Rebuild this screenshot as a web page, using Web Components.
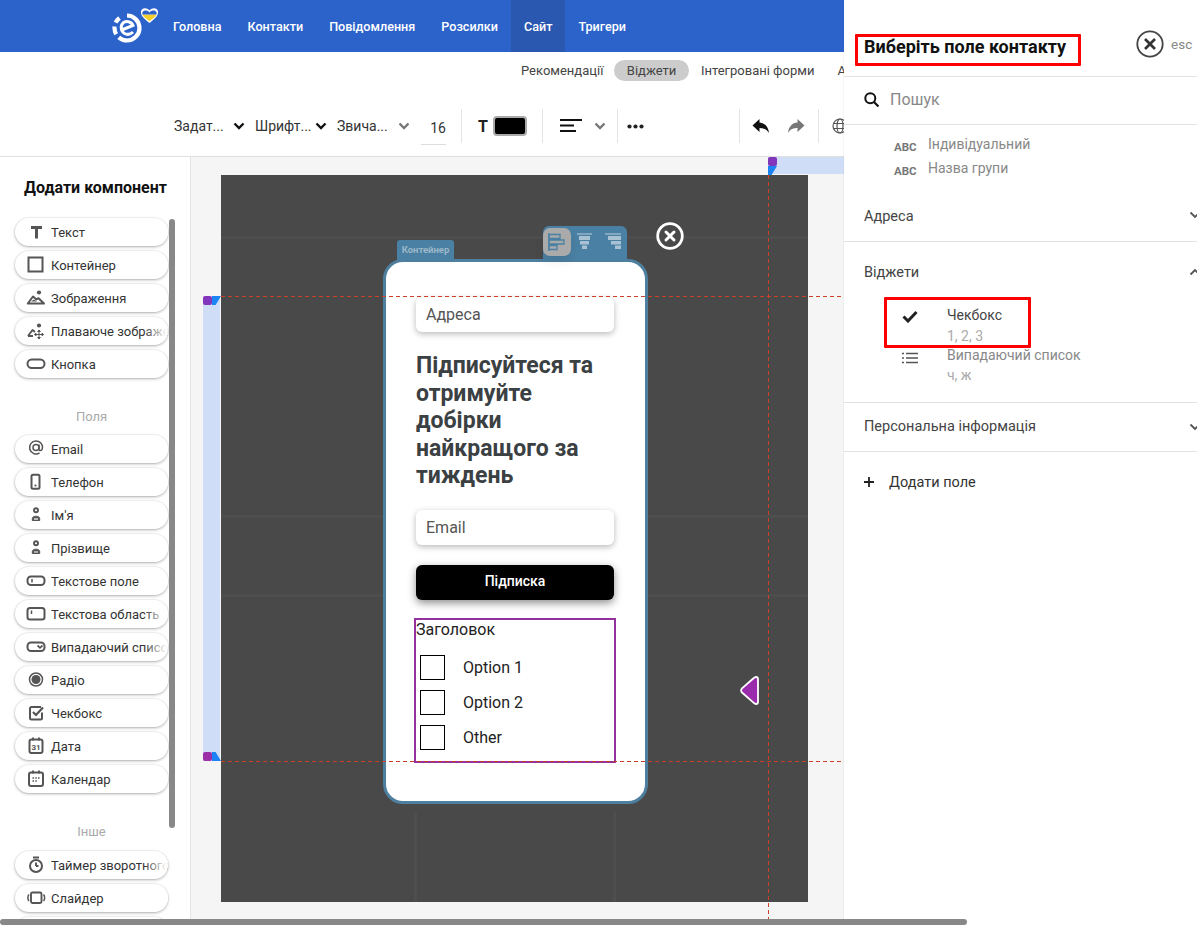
<!DOCTYPE html>
<html><head><meta charset="utf-8">
<style>
html,body{margin:0;padding:0;height:925px;width:1197px;overflow:hidden;background:#fff;font-family:Roboto,"Liberation Sans",sans-serif;}
</style></head><body>
<app-shell></app-shell>
<script>
const I={
 none:'',
 text:'<path d="M5 4h11v3h-4v9.500H9V7H5z" fill="#555"/>',
 box:'<rect x="2.500" y="2.500" width="14" height="14" fill="none" stroke="#555" stroke-width="2"/>',
 image:'<path d="M1.800 15.500L7 8.500l3.500 3 2-1.300 5.500 5.300z" fill="none" stroke="#555" stroke-width="2" stroke-linejoin="round"/><path d="M5 13.500l3-2 3 2z" fill="#555"/><circle cx="13" cy="4.500" r="2.100" fill="#555"/>',
 floatimg:'<path d="M2 15l4.500-6 2.500 2M2 15h5" fill="none" stroke="#555" stroke-width="1.900" stroke-linejoin="round"/><circle cx="13" cy="4.500" r="2.100" fill="#555"/><path d="M13 9v9M8.500 13.500h9M13 9l-1.300 1.500h2.600zM13 18l-1.300-1.500h2.600zM8.500 13.500l1.500-1.300v2.600zM17.500 13.500l-1.500-1.300v2.600z" fill="#555" stroke="#555" stroke-width="1"/>',
 button:'<rect x="1.500" y="5.500" width="17" height="8.500" rx="4.200" fill="none" stroke="#555" stroke-width="2"/>',
 at:'<circle cx="10" cy="8.500" r="3" fill="none" stroke="#555" stroke-width="1.500"/><path d="M13 5.500V10c0 2.500 3.500 2 3.500-1.500 0-4-3-6.500-6.500-6.500a6.500 6.500 0 1 0 3.500 12" fill="none" stroke="#555" stroke-width="1.500"/>',
 phone:'<rect x="5.500" y="2.800" width="8" height="14" rx="1.500" fill="none" stroke="#555" stroke-width="2"/><circle cx="9.500" cy="13.500" r="1.100" fill="#555"/>',
 person:'<circle cx="10" cy="5.300" r="2" fill="none" stroke="#555" stroke-width="1.900"/><path d="M6.300 15.500v-2c0-1.500 1.800-2.300 3.700-2.300s3.700.8 3.700 2.300v2z" fill="#555" stroke="#555" stroke-width="1"/><path d="M8 14h4" stroke="#fff" stroke-width="1.200"/>',
 input:'<rect x="1.500" y="5.500" width="17" height="8.500" rx="3.500" fill="none" stroke="#555" stroke-width="2"/><path d="M6 8v3.500" stroke="#555" stroke-width="1.500"/>',
 area:'<rect x="1.500" y="4" width="17" height="11.500" rx="2.500" fill="none" stroke="#555" stroke-width="2"/><path d="M5.500 6.500v3.500" stroke="#555" stroke-width="1.500"/>',
 select:'<rect x="1.500" y="5.500" width="17" height="8.500" rx="3.500" fill="none" stroke="#555" stroke-width="2"/><path d="M11.500 8.500l2.500 2.300 2.500-2.300" fill="none" stroke="#555" stroke-width="1.700"/>',
 radio:'<circle cx="10" cy="9.500" r="6.500" fill="none" stroke="#555" stroke-width="1.500"/><circle cx="10" cy="9.500" r="4.500" fill="#555"/>',
 check:'<path d="M16 9.500V15a1.500 1.500 0 0 1-1.500 1.500h-9A1.500 1.500 0 0 1 4 15V5.500A1.500 1.500 0 0 1 5.500 4H15" fill="none" stroke="#555" stroke-width="2"/><path d="M7 9l3 3 7-7.500" fill="none" stroke="#555" stroke-width="2.200"/>',
 date:'<rect x="3.500" y="3.500" width="13" height="13.500" rx="2" fill="none" stroke="#555" stroke-width="2"/><path d="M7 1.500v3M13 1.500v3" stroke="#555" stroke-width="1.900"/><text x="10" y="14" font-size="8" font-weight="700" text-anchor="middle" fill="#555" font-family="Roboto">31</text>',
 cal:'<rect x="3" y="3.500" width="14" height="13.500" rx="2" fill="none" stroke="#555" stroke-width="2"/><path d="M7 1.500v3M13 1.500v3" stroke="#555" stroke-width="1.900"/><path d="M6.500 9h1.500M9.300 9h1.500M12 9h1.500M6.500 12h1.500M9.300 12h1.500" stroke="#555" stroke-width="1.700"/>',
 timer:'<circle cx="10" cy="11" r="6" fill="none" stroke="#555" stroke-width="2"/><path d="M7 2.500h6M10 11V7.500M10 11h2.500" stroke="#555" stroke-width="1.900"/>',
 slider:'<rect x="5" y="4.500" width="10.500" height="10.500" rx="1.500" fill="none" stroke="#555" stroke-width="1.900"/><path d="M3 6.500C1.500 8 1.500 11.500 3 13M17.500 6.500c1.500 1.500 1.500 5 0 6.500" fill="none" stroke="#555" stroke-width="1.500"/>'
};
function def(name,css,html){
 customElements.define(name,class extends HTMLElement{
  connectedCallback(){
   if(this.shadowRoot)return;
   const s=this.attachShadow({mode:'open'});
   s.innerHTML='<style>'+css+'</style>'+(typeof html==='function'?html(this):html);
  }
 });
}
def('ui-pill',`:host{display:flex;align-items:center;box-sizing:border-box;width:153px;height:28px;flex:none;background:#fff;border-radius:14px;box-shadow:0 1px 3px rgba(0,0,0,.3),0 0 0 1px rgba(0,0,0,.03);position:relative;overflow:hidden;font-size:13px;color:#333;white-space:nowrap}
svg{width:20px;height:20px;position:absolute;left:11px;top:4px}
span{margin-left:36px}
:host::after{content:"";position:absolute;right:0;top:0;bottom:0;width:24px;background:linear-gradient(90deg,rgba(255,255,255,0),#fff 95%)}`,
 h=>`<svg viewBox="0 0 20 20">${I[h.getAttribute('icon')]}</svg><span><slot></slot></span>`);
def('nav-item',`:host{display:flex;align-items:center;height:52px;padding:0 13px;color:#fff;font-size:12.600px;font-weight:500;white-space:nowrap}
:host([active]){background:#2a58b0}`,'<slot></slot>');
def('top-nav',`:host{display:flex;height:52px;background:#2c63cb;padding-left:110px;box-sizing:border-box;flex:none}
svg{width:50px;height:52px;flex:none}`,
`<svg viewBox="0 0 50 52"><circle cx="17" cy="28" r="12.500" fill="none" stroke="#fff" stroke-width="4.200" stroke-dasharray="48 4 8 4 6 8.500" transform="rotate(-90 17 28)"/><path d="M10.500 30.500L23 25.500C21.500 21.500 16 20.500 13 23 10 26 11 31.500 14.500 33.500 17.500 35 21 34 23 32" fill="none" stroke="#fff" stroke-width="3"/><path d="M39.500 23C33 18 30.500 15 31 11.500 31.500 8 36.500 7 39.500 10.500 42.500 7 47.500 8 48 11.500 48.500 15 46 18 39.500 23z" fill="#fff"/><path d="M39.500 21.300C35 18 32.800 16 32.500 14.500h14C46.200 16 44 18 39.500 21.300z" fill="#f4cf2c"/><path d="M32.400 14.500c-1-4 4.500-5.500 7.100-2 2.600-3.500 8.100-2 7.100 2z" fill="#2c63cb"/></svg><slot></slot>`);
def('sub-tabs',`:host{display:flex;height:52px;box-sizing:border-box;padding:8px 0 0 508px;align-items:flex-start;font-size:13px;color:#444;flex:none;white-space:nowrap}
span{padding:0 11px 0 13px;height:21px;line-height:21px}
b{font-weight:400;background:#ccc;border-radius:11px;padding:0 12.500px;height:21px;line-height:21px}`,
`<span>Рекомендації</span><b>Віджети</b><span style="padding-left:12px">Інтегровані форми</span><span style="padding-left:12px">Автоматичні</span>`);
const chev=(c)=>`<svg width="12" height="8" viewBox="0 0 12 8"><path d="M1.500 1.500L6 6l4.500-4.500" fill="none" stroke="${c}" stroke-width="2.400"/></svg>`;
def('tool-bar',`:host{display:flex;height:53px;box-sizing:border-box;border-bottom:1px solid #e0e0e0;padding:5px 0 0 174px;align-items:flex-start;font-size:14px;color:#333;flex:none;white-space:nowrap}
.t{height:34px;display:flex;align-items:center;flex:none}
.sep{width:1px;height:34px;background:#e4e4e4;flex:none}
.num{border-bottom:1px solid #ddd;height:36px;width:25px;text-align:right;box-sizing:border-box;line-height:38px;margin-left:11px;font-size:14px;flex:none}
.sw{background:#000;border:2px solid #aaa;border-radius:4px;box-sizing:border-box;width:34px;height:20px;margin-left:5px}
`,
`<div class="t" style="width:59px">Задат...</div><div class="t" style="width:22px">${chev('#111')}</div>
<div class="t" style="width:60px">Шрифт...</div><div class="t" style="width:22px">${chev('#111')}</div>
<div class="t" style="width:61px">Звича...</div><div class="t" style="width:12px">${chev('#777')}</div>
<div class="num">16</div><div class="sep" style="margin-left:15px"></div>
<div class="t" style="margin-left:16px;font-weight:700;font-size:16px;color:#222">T<div class="sw"></div></div>
<div class="sep" style="margin-left:15px"></div>
<div class="t" style="margin-left:17px"><svg width="23" height="14" viewBox="0 0 23 14" style="display:block"><path d="M0 1h22M0 6.500h14M0 12h16" stroke="#111" stroke-width="1.800"/></svg></div>
<div class="t" style="margin-left:11px">${chev('#777')}</div>
<div class="sep" style="margin-left:11px"></div>
<div class="t" style="margin-left:9px"><svg width="17" height="5" viewBox="0 0 17 5"><circle cx="2.500" cy="2.500" r="2.100" fill="#222"/><circle cx="8.500" cy="2.500" r="2.100" fill="#222"/><circle cx="14.500" cy="2.500" r="2.100" fill="#222"/></svg></div>
<div class="sep" style="margin-left:95px"></div>
<div class="t" style="margin-left:12px"><svg width="18" height="16" viewBox="0 0 18 16"><path d="M7.500 1L.5 7.500l7 6.500V10c4 0 7 .8 9.500 5-.5-5.500-3.500-10-9.500-10.500z" fill="#111"/></svg></div>
<div class="t" style="margin-left:17px"><svg width="18" height="16" viewBox="0 0 18 16"><path d="M10.500 1l7 6.500-7 6.500V10c-4 0-7 .8-9.500 5 .5-5.500 3.500-10 9.500-10.500z" fill="#777"/></svg></div>
<div class="sep" style="margin-left:13px"></div>
<div class="t" style="margin-left:12px"><svg width="18" height="18" viewBox="0 0 18 18" fill="none" stroke="#555" stroke-width="1.200"><circle cx="9" cy="9" r="7"/><ellipse cx="9" cy="9" rx="3" ry="7"/><path d="M2 6.500h14M2 11.500h14"/></svg></div>`);
def('side-panel',`:host{display:flex;flex-direction:column;align-items:flex-start;box-sizing:border-box;width:191px;flex:none;height:100%;border-right:1px solid #e4e4e4;padding:22px 0 0 15px;position:relative;overflow:hidden;background:#fff}
h3{margin:0 0 21px;font-size:16px;line-height:18px;font-weight:700;width:161px;text-align:center;color:#111;white-space:nowrap}
.list{display:flex;flex-direction:column;gap:5px}
.sec{font-size:13px;color:#aaa;width:153px;text-align:center;line-height:16px}
.thumb{position:absolute;left:169px;top:62px;width:6px;height:609px;background:#888;border-radius:3px}`,
`<h3>Додати компонент</h3><div class="list"><slot name="a"></slot></div><div class="sec" style="margin:31px 0 10px">Поля</div><div class="list"><slot name="b"></slot></div><div class="sec" style="margin:31px 0 11px">Інше</div><div class="list"><slot name="c"></slot></div><div class="thumb"></div>`);
def('form-field',`:host{display:flex;align-items:center;box-sizing:border-box;width:198px;height:35px;background:#fff;border-radius:6px;box-shadow:0 2px 6px rgba(0,0,0,.28);padding-left:10px;font-size:16px;color:#555}`,'<slot></slot>');
def('check-row',`:host{display:flex;align-items:center;height:25px;margin:0 0 10px 4px;font-size:16px;color:#222}
i{display:block;box-sizing:border-box;width:25px;height:25px;border:1px solid #000;margin-right:18px}`,'<i></i><slot></slot>');
def('form-card',`:host{display:block;box-sizing:border-box;width:265px;height:545px;background:#fff;border:3px solid #4e7f9f;border-radius:20px;padding:35px 0 0 30px;position:relative;margin:84px 0 0 162px}
h2{margin:20px 0 20px;font-size:23px;line-height:27.500px;font-weight:700;color:#3b4043;width:195px}
.btn{box-sizing:border-box;width:198px;height:35px;margin-top:20px;padding-bottom:2px;border-radius:6px;background:#000;color:#fff;font-size:14px;font-weight:500;display:flex;align-items:center;justify-content:center;box-shadow:0 3px 8px rgba(0,0,0,.45)}
.grp{box-sizing:border-box;width:202px;height:145px;margin:18px 0 0 -2px;border:2px solid #93319f;}
.grp p{margin:0 0 16px;font-size:16px;line-height:19px;color:#222}
.tab{position:absolute;left:11px;top:-22px;width:57px;height:20px;background:#4a80a3;border-radius:3px 3px 0 0;color:#9bb7c9;font-size:9.500px;font-weight:700;line-height:20px;text-align:center}
.tools{position:absolute;right:18px;top:-36px;width:84px;height:34px;background:#4a80a3;border-radius:6px 6px 0 0;display:flex}
.tools div{width:28px;height:28px;display:flex;align-items:center;justify-content:center;margin-top:2px}
.tools div:first-child{background:#aaa;border-radius:7px;box-shadow:0 6px 10px rgba(0,0,0,.08)}
`,
`<div class="tab">Контейнер</div>
<div class="tools"><div><svg width="18" height="18" viewBox="0 0 18 18" fill="none" stroke="#4a80a3" stroke-width="1.300"><path d="M1 0v18"/><path d="M1 1.500h11v4H1zM1 7h15v4H1zM1 12.500h8v4H1z"/></svg></div>
<div><svg width="18" height="18" viewBox="0 0 18 18"><path d="M1 1h15" stroke="#a9c2d3" stroke-width="1.200"/><path d="M3 3h11v4H3zM4 8h9v3.500H4zM6 12.500h5V16H6z" fill="#a9c2d3"/></svg></div>
<div><svg width="18" height="18" viewBox="0 0 18 18"><path d="M1 1h16" stroke="#a9c2d3" stroke-width="1.200"/><path d="M4 3h13v4H4zM7 8h10v3.500H7zM11 12.500h6V16h-6z" fill="#a9c2d3"/></svg></div></div>
<form-field>Адреса</form-field>
<h2>Підписуйтеся та отримуйте добірки найкращого за тиждень</h2>
<form-field>Email</form-field>
<div class="btn">Підписка</div>
<div class="grp"><p>Заголовок</p><check-row>Option 1</check-row><check-row>Option 2</check-row><check-row>Other</check-row></div>`);
def('design-canvas',`:host{display:block;flex:1;position:relative;height:100%;background:#f5f5f5;overflow:hidden;box-sizing:border-box;padding:18px 0 0 30px}
.dark{box-sizing:border-box;width:587px;height:727px;background-color:#494949;overflow:hidden;
 background-image:linear-gradient(#4e4e4e,#4e4e4e),linear-gradient(#4e4e4e,#4e4e4e),linear-gradient(#4e4e4e,#4e4e4e),linear-gradient(#4e4e4e,#4e4e4e),linear-gradient(#4e4e4e,#4e4e4e);
 background-size:100% 3px,100% 3px,100% 3px,3px 90px,3px 90px;background-repeat:no-repeat;
 background-position:0 61px,0 340px,0 419px,193px 637px,392px 637px}
.bandT{position:absolute;left:577px;top:0;width:76px;height:17px;background:#cfddf7}
.bandL{position:absolute;left:12px;top:140px;width:17px;height:464px;background:#cfddf7}
.hl{position:absolute;left:30px;width:623px;height:1px;background:repeating-linear-gradient(90deg,#cc3f28 0 4px,transparent 4px 7px)}
.vl{position:absolute;left:577px;top:18px;width:1px;height:745px;background:repeating-linear-gradient(180deg,#cc3f28 0 4px,transparent 4px 7px)}
.hw{position:absolute;width:9px;height:9px;background:#8136bb;border-radius:2px}
.hb{position:absolute;width:9px;height:9px;background:#1b83f3}
.sb{position:absolute;right:0;top:18px;width:6px;height:186px;background:#888}
.close{position:absolute;left:465px;top:65px;width:28px;height:28px}
.arrow{position:absolute;left:549px;top:519px;width:19px;height:29px}
`,
`<div class="bandT"></div><div class="bandL"></div>
<div class="dark"><form-card></form-card></div>
<div class="hl" style="top:139px"></div><div class="hl" style="top:604px"></div><div class="vl"></div>
<div class="hw" style="left:577px;top:0"></div><div class="hb" style="left:577px;top:9px;clip-path:polygon(0 0,100% 0,40% 100%,0 100%)"></div>
<div class="hw" style="left:12px;top:139px"></div><div class="hb" style="left:21px;top:139px;clip-path:polygon(0 0,100% 0,40% 100%,0 100%)"></div>
<div class="hw" style="left:12px;top:595px;background:#9a2fa8"></div><div class="hb" style="left:21px;top:595px;clip-path:polygon(0 0,40% 0,100% 100%,0 100%)"></div>
<div class="sb"></div>
<svg class="close" viewBox="0 0 28 28"><circle cx="14" cy="14" r="12.300" fill="#494949" stroke="#fff" stroke-width="2.800"/><path d="M10 10l8 8M18 10l-8 8" stroke="#fff" stroke-width="3" stroke-linecap="round"/></svg>
<svg class="arrow" viewBox="0 0 19 29"><path d="M16 1c1.500 0 2 1 2 2v23c0 1-.7 2-2 2-1 0-1.800-.6-2.500-1.300L2 16.500c-1.200-1.200-1.200-3 0-4.200L13.500 2.300C14.200 1.600 15 1 16 1z" fill="#9a2bad" stroke="#fff" stroke-width="1.800"/></svg>`);
def('group-row',`:host{display:flex;align-items:center;justify-content:space-between;box-sizing:border-box;width:353px;font-size:14.500px;color:#444;padding-left:20px;position:relative;overflow:hidden}
svg{position:absolute;right:-4px;top:50%;margin-top:-4px}`,
h=>`<slot></slot><svg width="12" height="8" viewBox="0 0 12 8"><path d="${h.hasAttribute('up')?'M1.500 6.500L6 2l4.500 4.500':'M1.500 1.500L6 6l4.500-4.500'}" fill="none" stroke="#555" stroke-width="1.800"/></svg>`);
def('field-item',`:host{display:flex;align-items:center;height:24px;padding-left:50px;font-size:14px;color:#888;white-space:nowrap}
b{width:34px;font-size:11.500px;color:#777;font-weight:700;position:relative;top:2.500px}`,'<b>ABC</b><slot></slot>');
def('contact-drawer',`:host{position:absolute;left:844px;top:0;width:353px;height:925px;background:#fff;box-shadow:0 0 2px rgba(0,0,0,.1);overflow:hidden;display:flex;flex-direction:column;color:#333}
.head{height:77px;box-sizing:border-box;border-bottom:1px solid #e2e2e2;padding:34px 0 0 11px;display:flex;flex:none;position:relative}
h1{margin:0;box-sizing:border-box;width:226px;height:32px;border:3.500px solid #f00;border-radius:1px;font-size:18px;font-weight:700;line-height:19px;color:#111;padding-left:6px;white-space:nowrap}
.x{position:absolute;left:291px;top:30px}
.esc{position:absolute;left:327px;top:36px;font-size:13.500px;color:#888}
.search{height:48px;box-sizing:border-box;border-bottom:1px solid #e2e2e2;display:flex;align-items:center;padding:0 0 2px 20px;font-size:16px;color:#888;gap:11px;flex:none}
.abc{padding-top:7px;height:63px;box-sizing:border-box;flex:none}
.sep{height:1px;background:#e2e2e2;flex:none}
.wid{box-sizing:border-box;height:160px;position:relative;flex:none;}
.item{position:absolute;left:103px;font-size:14px;line-height:20px;color:#888;white-space:nowrap}
.item small{display:block;font-size:14px;color:#aaa}
.red{position:absolute;left:40px;top:55px;width:147px;height:51px;box-sizing:border-box;border:3.500px solid #f00;border-radius:1px}
.add{display:flex;align-items:center;height:60px;padding-left:20px;gap:15px;font-size:14.500px;flex:none;color:#333}
`,
`<div class="head"><h1>Виберіть поле контакту</h1><svg class="x" width="30" height="30" viewBox="0 0 30 30"><circle cx="15" cy="14" r="12.700" fill="none" stroke="#444" stroke-width="1.800"/><path d="M10 9l10 10M20 9L10 19" stroke="#333" stroke-width="2.700"/></svg><div class="esc">esc</div></div>
<div class="search"><svg width="15" height="15" viewBox="0 0 15 15"><circle cx="6.300" cy="6.300" r="5" fill="none" stroke="#111" stroke-width="2"/><path d="M10 10l4.500 4.500" stroke="#111" stroke-width="2.200"/></svg>Пошук</div>
<div class="abc"><field-item>Індивідуальний</field-item><field-item>Назва групи</field-item></div>
<group-row style="height:53px;padding-top:3px">Адреса</group-row><div class="sep"></div>
<div class="wid"><group-row up style="height:60px;padding-top:1px">Віджети</group-row>
<div class="red"></div>
<svg style="position:absolute;left:58px;top:68px" width="16" height="13" viewBox="0 0 16 13"><path d="M1.500 6.500l4.500 4.500 8.500-9" fill="none" stroke="#222" stroke-width="3"/></svg>
<div class="item" style="top:63px;color:#444">Чекбокс<small style="position:relative;top:1px">1, 2, 3</small></div>
<svg style="position:absolute;left:57px;top:110px" width="18" height="12" viewBox="0 0 18 12"><path d="M5 1.500h12M5 6h12M5 10.500h12M1 1.500h2M1 6h2M1 10.500h2" stroke="#555" stroke-width="1.500"/></svg>
<div class="item" style="top:103px">Випадаючий список<small>ч, ж</small></div></div><div class="sep"></div>
<group-row style="height:48px;padding-bottom:2px">Персональна інформація</group-row><div class="sep"></div>
<div class="add"><svg width="10" height="10" viewBox="0 0 10 10"><path d="M5 0v10M0 5h10" stroke="#222" stroke-width="1.800"/></svg>Додати поле</div>`);
def('app-shell',`:host{display:flex;flex-direction:column;width:1197px;height:925px;position:relative;overflow:hidden}
.main{flex:1;display:flex;min-height:0}
.hs{position:absolute;left:0;bottom:0;width:967px;height:6px;background:#888;border-radius:3px}`,
`<top-nav><nav-item>Головна</nav-item><nav-item>Контакти</nav-item><nav-item>Повідомлення</nav-item><nav-item>Розсилки</nav-item><nav-item active>Сайт</nav-item><nav-item>Тригери</nav-item></top-nav>
<sub-tabs></sub-tabs><tool-bar></tool-bar>
<div class="main"><side-panel>
<ui-pill slot="a" icon="text">Текст</ui-pill><ui-pill slot="a" icon="box">Контейнер</ui-pill><ui-pill slot="a" icon="image">Зображення</ui-pill><ui-pill slot="a" icon="floatimg">Плаваюче зображення</ui-pill><ui-pill slot="a" icon="button">Кнопка</ui-pill>
<ui-pill slot="b" icon="at">Email</ui-pill><ui-pill slot="b" icon="phone">Телефон</ui-pill><ui-pill slot="b" icon="person">Ім'я</ui-pill><ui-pill slot="b" icon="person">Прізвище</ui-pill><ui-pill slot="b" icon="input">Текстове поле</ui-pill><ui-pill slot="b" icon="area">Текстова область</ui-pill><ui-pill slot="b" icon="select">Випадаючий список</ui-pill><ui-pill slot="b" icon="radio">Радіо</ui-pill><ui-pill slot="b" icon="check">Чекбокс</ui-pill><ui-pill slot="b" icon="date">Дата</ui-pill><ui-pill slot="b" icon="cal">Календар</ui-pill>
<ui-pill slot="c" icon="timer">Таймер зворотного відліку</ui-pill><ui-pill slot="c" icon="slider">Слайдер</ui-pill><ui-pill slot="c" icon="none"></ui-pill>
</side-panel><design-canvas></design-canvas></div>
<contact-drawer></contact-drawer><div class="hs"></div>`);
</script></body></html>
